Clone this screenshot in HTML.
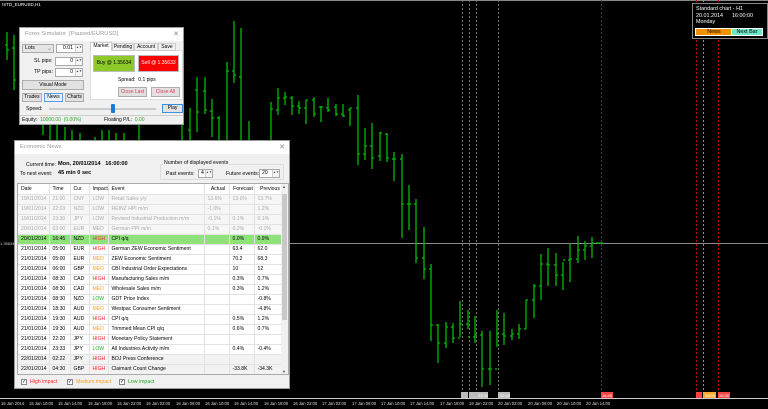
<!DOCTYPE html>
<html><head><meta charset="utf-8">
<style>
*{margin:0;padding:0;box-sizing:border-box}
body{width:768px;height:409px;background:#000;overflow:hidden;position:relative;font-family:"Liberation Sans",sans-serif;font-size:5.2px;color:#000;white-space:nowrap}
.a{position:absolute}
.win{position:absolute;background:#f0f0f0;border:1px solid #9a9a9a}
.tb{position:absolute;left:0;right:0;top:0;height:13px;background:#fff;color:#999;font-size:5.8px;line-height:13px;padding-left:5px}
.x{position:absolute;right:4px;top:0;color:#888;font-size:7px;line-height:13px}
.btn{position:absolute;background:#e1e1e1;border:1px solid #adadad;text-align:center;font-size:5px}
.inp{position:absolute;background:#fff;border:1px solid #aaa;font-size:5.2px;text-align:right;padding-right:9px}
.sp{position:absolute;right:0;top:0;bottom:0;width:7px;border-left:1px solid #ccc;background:#f4f4f4;font-size:3px;color:#444;text-align:center;line-height:4px}
table{border-collapse:collapse;font-size:5.1px;table-layout:fixed}
td{height:10px;border-right:1px solid #e2e2e2;border-bottom:1px solid #e2e2e2;padding-left:3px;white-space:nowrap;overflow:hidden}
tr.p td{color:#aaa;background:#f6f6f6}
tr.g td{background:#8fe27a}
tr.d td{background:#f2f2f2}
.H{color:#f22}.M{color:#f5a020}.L{color:#2a2}
.ax{position:absolute;top:401px;font-size:4.2px;color:#ddd;white-space:nowrap}
.tab{position:absolute;height:8px;border:1px solid #ccc;text-align:center;line-height:7px;font-size:5px}
</style></head><body>

<svg class="a" style="left:0;top:0" width="768" height="409">
<line x1="0" y1="0.5" x2="768" y2="0.5" stroke="#888"/>
<line x1="0" y1="243.5" x2="768" y2="243.5" stroke="#8a8a8a"/>
<g stroke-dasharray="2,2" stroke-width="1">
<line x1="462.5" y1="0" x2="462.5" y2="398" stroke="#777"/>
<line x1="469.5" y1="0" x2="469.5" y2="398" stroke="#777"/>
<line x1="476.5" y1="0" x2="476.5" y2="398" stroke="#777"/>
<line x1="498.5" y1="0" x2="498.5" y2="398" stroke="#777"/>
<line x1="601.5" y1="0" x2="601.5" y2="398" stroke="#b00"/>
<line x1="696.5" y1="0" x2="696.5" y2="398" stroke="#b00"/>
<line x1="703.5" y1="0" x2="703.5" y2="398" stroke="#d80"/>
<line x1="718.5" y1="0" x2="718.5" y2="398" stroke="#b00"/>
</g>
<g stroke="#0b0" stroke-width="1.3" fill="none">
<path d="M7,32V60M5,45H7M7,50H9 M14,35V90M12,48H14M14,80H16 M43,124V135 M50,122V140 M57,124V140 M65,127V140 M72,130V140 M80,133V140 M95,137V140 M102,130V140 M109,130V140 M116,133V140 M124,133V140 M139,120V140 M182,118V140 M190,108V140M188,130H190 M197,77V132M195,90H197M197,112H199 M205,77V114M203,91H205M205,110H207 M212,99V137M210,111H212M212,118H214 M219,116V140M217,118H219 M227,62V140M227,71H229 M234,21V83M232,71H234M234,75H236 M241,28V140M239,77H241 M249,121V140 M271,102V140M271,109H273 M278,88V115M276,110H278M278,98H280 M285,92V105M283,98H285M285,97H287"/>
<path d="M292,96V115M290,98H292M292,106H294 M299,101V114M297,106H299M299,108H301 M306,100V124M304,108H306M306,100H308 M314,97V117M312,100H314M314,114H316 M321,106V122M319,107H321M321,107H323 M328,98V112M326,108H328M328,110H330 M336,104V116M334,107H336M336,114H338 M343,104V117M341,114H343M343,116H345 M350,108V126M348,110H350M350,108H352 M358,95V165M356,108H358M358,154H360 M365,128V160M363,154H365M365,146H367 M372,123V169M370,146H372M372,158H374 M380,132V161M378,156H380M380,133H382 M387,133V162M385,134H387M387,158H389 M394,152V181M392,159H394M394,159H396 M402,154V238M400,159H402M402,204H404 M409,185V230M407,204H409M409,204H411 M416,199V263M414,204H416M416,258H418 M424,227V279M422,258H424M424,269H426 M431,264V341M429,269H431M431,325H433 M438,324V363M436,325H438M438,343H440 M446,322V348M444,343H446M446,327H448 M453,323V343M451,327H453M453,338H455 M460,301V337M458,338H460M460,324H462 M468,310V329M466,324H468M468,337H470 M475,316V343M473,337H475M475,335H477 M482,331V387M480,335H482M482,369H484 M490,331V385M488,369H490M490,369H492 M497,310V347M495,369H497M497,334H499 M504,313V345M502,334H504M504,336H506 M512,329V340M510,336H512M512,334H514 M519,324V339M517,334H519M519,329H521 M526,300V329M524,329H526M526,300H528 M534,284V318M532,300H534M534,286H536 M541,254V300M539,286H541M541,264H543 M548,248V286M546,264H548M548,265H550 M556,253V286M554,265H556M556,275H558 M563,262V290M561,275H563M563,260H565 M570,243V282M568,260H570M570,259H572 M578,236V263M576,259H578M578,250H580 M585,241V260M583,250H585M585,246H587 M592,237V258M590,246H592M592,243H594 M596,243H603"/>
</g>
<line x1="0" y1="398.5" x2="768" y2="398.5" stroke="#ccc"/>
<g font-family="Liberation Sans" font-size="4" fill="#fff">
<rect x="461" y="392" width="7" height="6" fill="#bbb"/><rect x="469" y="392" width="7" height="6" fill="#bbb"/><rect x="476" y="392" width="12" height="6" fill="#bbb"/><rect x="498" y="392" width="12" height="6" fill="#bbb"/>
<rect x="601" y="392" width="12" height="6" fill="#f44"/><rect x="696" y="392" width="6" height="6" fill="#f44"/><rect x="703" y="392" width="13" height="6" fill="#fa3"/><rect x="718" y="392" width="12" height="6" fill="#f44"/>
<text x="602" y="397">16:45</text><text x="705" y="397">05:00</text><text x="719" y="397">08:30</text><text x="478" y="397">23:30</text><text x="500" y="397">02:00</text>
</g>
</svg>

<div class="a" style="left:2px;top:2px;color:#fff;font-size:4.5px">!STD_EURUSD,H1</div>
<div class="a" style="left:0;top:241px;color:#ccc;font-size:4px;background:#000">1.35634</div>

<div class="ax" style="left:1px">15 Jan 2014</div>
<div class="ax" style="left:29px">15 Jan 10:00</div>
<div class="ax" style="left:58px">15 Jan 14:00</div>
<div class="ax" style="left:88px">15 Jan 18:00</div>
<div class="ax" style="left:117px">15 Jan 22:00</div>
<div class="ax" style="left:146px">16 Jan 02:00</div>
<div class="ax" style="left:176px">16 Jan 06:00</div>
<div class="ax" style="left:205px">16 Jan 10:00</div>
<div class="ax" style="left:234px">16 Jan 14:00</div>
<div class="ax" style="left:264px">16 Jan 18:00</div>
<div class="ax" style="left:293px">16 Jan 22:00</div>
<div class="ax" style="left:322px">17 Jan 02:00</div>
<div class="ax" style="left:352px">17 Jan 06:00</div>
<div class="ax" style="left:381px">17 Jan 10:00</div>
<div class="ax" style="left:410px">17 Jan 14:00</div>
<div class="ax" style="left:440px">17 Jan 18:00</div>
<div class="ax" style="left:469px">19 Jan 22:00</div>
<div class="ax" style="left:498px">20 Jan 02:00</div>
<div class="ax" style="left:528px">20 Jan 06:00</div>
<div class="ax" style="left:557px">20 Jan 10:00</div>
<div class="ax" style="left:586px">20 Jan 14:00</div>

<div class="a" style="left:692px;top:3px;width:76px;height:36px;border:1px solid #888;background:#000;color:#fff;font-size:5.4px;line-height:6.5px;padding:2px 0 0 3px">Standard chart - H1<br>20.01.2014&nbsp;&nbsp;&nbsp;&nbsp;&nbsp;&nbsp;16:00:00<br>Monday
<div class="a" style="left:2px;top:24px;width:38px;height:8px;background:#f39000;border:1px solid #fff;color:#000;text-align:center;line-height:6px">News</div>
<div class="a" style="left:38px;top:24px;width:32px;height:8px;background:#6fe8c8;border:1px solid #fff;color:#000;text-align:center;line-height:6px">Next Bar</div>
</div>

<div class="win" style="left:19px;top:27px;width:165px;height:98px">
<div class="tb">Forex Simulator&nbsp; [Paused/EURUSD]<span class="x">✕</span></div>
<div class="inp" style="left:2px;top:16px;width:32px;height:9px;background:#e5e5e5;text-align:left;padding-left:2px;line-height:7px">Lots<span style="position:absolute;right:2px;font-size:4px">⌵</span></div>
<div class="inp" style="left:36px;top:16px;width:27px;height:9px;line-height:7px">0.01<span class="sp">▲▼</span></div>
<div class="a" style="left:14px;top:30px">SL pips:</div>
<div class="inp" style="left:35px;top:29px;width:28px;height:9px;line-height:7px">0<span class="sp">▲▼</span></div>
<div class="a" style="left:14px;top:41px">TP pips:</div>
<div class="inp" style="left:35px;top:40px;width:28px;height:9px;line-height:7px">0<span class="sp">▲▼</span></div>
<div class="btn" style="left:2px;top:52px;width:62px;height:10px;line-height:8px">Visual Mode</div>
<div class="btn" style="left:2px;top:65px;width:20px;height:9px;line-height:7px">Trades</div>
<div class="btn" style="left:24px;top:65px;width:19px;height:9px;line-height:7px;border-color:#5a9ee0;background:#e5f1fb">News</div>
<div class="btn" style="left:45px;top:65px;width:19px;height:9px;line-height:7px">Charts</div>
<div class="a" style="left:70px;top:22px;width:93px;height:50px;background:#fff;border:1px solid #ddd"></div>
<div class="tab" style="left:70px;top:14px;width:22px;height:9px;background:#fff;border-bottom:none">Market</div>
<div class="tab" style="left:92px;top:15px;width:22px">Pending</div>
<div class="tab" style="left:114px;top:15px;width:24px">Account</div>
<div class="tab" style="left:138px;top:15px;width:18px">Save</div>
<div class="a" style="left:73px;top:27px;width:42px;height:17px;background:#8cc929;border:1px solid #bbb;text-align:center;line-height:15px;font-size:5px">Buy @ 1.35634</div>
<div class="a" style="left:118px;top:27px;width:41px;height:17px;background:#f00;border:1px solid #bbb;color:#fff;text-align:center;line-height:15px;font-size:5px">Sell @ 1.35633</div>
<div class="a" style="left:98px;top:49px;font-size:5px">Spread:&nbsp; 0.1 pips</div>
<div class="btn" style="left:98px;top:59px;width:29px;height:10px;line-height:8px;color:#e04060">Close Last</div>
<div class="btn" style="left:131px;top:59px;width:29px;height:10px;line-height:8px;color:#e04060">Close All</div>
<div class="a" style="left:6px;top:78px">Speed:</div>
<div class="a" style="left:29px;top:80px;width:107px;height:2px;background:#ddd;border:1px solid #ccc"></div>
<div class="a" style="left:91px;top:76px;width:4px;height:9px;background:#1e78d8;border-radius:1px"></div>
<div class="btn" style="left:142px;top:76px;width:21px;height:9px;line-height:7px;border-color:#3c8ee0">Play</div>
<div class="a" style="left:0;top:87px;width:163px;height:9px;border-top:1px solid #ccc;line-height:8px;padding-left:2px;font-size:5px">Equity: <span style="color:#2a2">&nbsp;10000.00&nbsp; (0.00%)</span><span style="position:absolute;left:84px">Floating P/L: <span style="color:#2a2">&nbsp;0.00</span></span></div>
</div>

<div class="win" style="left:14px;top:140px;width:276px;height:249px">
<div class="tb">Economic News<span class="x">✕</span></div>
<div class="a" style="left:11px;top:21px">Current time:</div>
<div class="a" style="left:43px;top:20px;font-weight:bold;font-size:5.6px">Mon, 20/01/2014&nbsp;&nbsp; 16:00:00</div>
<div class="a" style="left:5px;top:30px">To next event:</div>
<div class="a" style="left:43px;top:29px;font-weight:bold;font-size:5.6px">45 min 0 sec</div>
<div class="a" style="left:145px;top:23px;width:124px;height:16px;border:1px solid #ddd"></div>
<div class="a" style="left:148px;top:19px;background:#f0f0f0;padding:0 1px">Number of displayed events</div>
<div class="a" style="left:151px;top:30px">Past events:</div>
<div class="inp" style="left:183px;top:28px;width:15px;height:9px;text-align:left;padding-left:2px;line-height:7px">4<span class="sp">▲▼</span></div>
<div class="a" style="left:211px;top:30px">Future events:</div>
<div class="inp" style="left:244px;top:28px;width:21px;height:9px;text-align:left;padding-left:2px;line-height:7px">20<span class="sp">▲▼</span></div>
<div class="a" style="left:2px;top:42px;width:272px;height:192px;background:#fff;border:1px solid #aaa;overflow:hidden">
<table style="width:265px">
<colgroup><col style="width:31px"><col style="width:21px"><col style="width:19px"><col style="width:19px"><col style="width:96px"><col style="width:25px"><col style="width:25px"><col style="width:29px"></colgroup>
<tr><td>Date</td><td>Time</td><td>Cur.</td><td>Impact</td><td>Event</td><td style="text-align:center">Actual</td><td style="text-align:center">Forecast</td><td style="text-align:center">Previous</td></tr>
<tr class="p"><td>19/01/2014</td><td>21:00</td><td>CNY</td><td>LOW</td><td>Retail Sales y/y</td><td>13.6%</td><td>13.6%</td><td>13.7%</td></tr>
<tr class="p"><td>19/01/2014</td><td>22:03</td><td>NZD</td><td>LOW</td><td>REINZ HPI m/m</td><td>-1.0%</td><td></td><td>1.2%</td></tr>
<tr class="p"><td>19/01/2014</td><td>23:30</td><td>JPY</td><td>LOW</td><td>Revised Industrial Production m/m</td><td>-0.1%</td><td>0.1%</td><td>0.1%</td></tr>
<tr class="p"><td>20/01/2014</td><td>02:00</td><td>EUR</td><td>MED</td><td>German PPI m/m</td><td>0.1%</td><td>0.2%</td><td>-0.1%</td></tr>
<tr class="g"><td>20/01/2014</td><td>16:45</td><td>NZD</td><td style="color:#e33">HIGH</td><td>CPI q/q</td><td></td><td>0.0%</td><td>0.9%</td></tr>
<tr><td>21/01/2014</td><td>05:00</td><td>EUR</td><td class="H">HIGH</td><td>German ZEW Economic Sentiment</td><td></td><td>63.4</td><td>62.0</td></tr>
<tr><td>21/01/2014</td><td>05:00</td><td>EUR</td><td class="M">MED</td><td>ZEW Economic Sentiment</td><td></td><td>70.2</td><td>68.3</td></tr>
<tr><td>21/01/2014</td><td>06:00</td><td>GBP</td><td class="M">MED</td><td>CBI Industrial Order Expectations</td><td></td><td>10</td><td>12</td></tr>
<tr><td>21/01/2014</td><td>08:30</td><td>CAD</td><td class="H">HIGH</td><td>Manufacturing Sales m/m</td><td></td><td>0.3%</td><td>0.7%</td></tr>
<tr><td>21/01/2014</td><td>08:30</td><td>CAD</td><td class="M">MED</td><td>Wholesale Sales m/m</td><td></td><td>0.3%</td><td>1.2%</td></tr>
<tr><td>21/01/2014</td><td>08:30</td><td>NZD</td><td class="L">LOW</td><td>GDT Price Index</td><td></td><td></td><td>-0.8%</td></tr>
<tr><td>21/01/2014</td><td>18:30</td><td>AUD</td><td class="M">MED</td><td>Westpac Consumer Sentiment</td><td></td><td></td><td>-4.8%</td></tr>
<tr><td>21/01/2014</td><td>19:30</td><td>AUD</td><td class="H">HIGH</td><td>CPI q/q</td><td></td><td>0.5%</td><td>1.2%</td></tr>
<tr><td>21/01/2014</td><td>19:30</td><td>AUD</td><td class="M">MED</td><td>Trimmed Mean CPI q/q</td><td></td><td>0.6%</td><td>0.7%</td></tr>
<tr><td>21/01/2014</td><td>22:20</td><td>JPY</td><td class="H">HIGH</td><td>Monetary Policy Statement</td><td></td><td></td><td></td></tr>
<tr><td>21/01/2014</td><td>23:33</td><td>JPY</td><td class="L">LOW</td><td>All Industries Activity m/m</td><td></td><td>0.4%</td><td>-0.4%</td></tr>
<tr class="d"><td>22/01/2014</td><td>02:22</td><td>JPY</td><td class="H">HIGH</td><td>BOJ Press Conference</td><td></td><td></td><td></td></tr>
<tr class="d"><td>22/01/2014</td><td>04:30</td><td>GBP</td><td class="H">HIGH</td><td>Claimant Count Change</td><td></td><td>-33.8K</td><td>-34.3K</td></tr>
</table>
<div class="a" style="right:0;top:0;width:7px;height:190px;background:#f0f0f0"><div class="a" style="left:1px;top:10px;width:5px;height:126px;background:#c8c8c8"></div><div class="a" style="top:0;left:1px;font-size:4px;color:#555">▲</div><div class="a" style="bottom:0;left:1px;font-size:4px;color:#555">▼</div></div>
</div>
<div class="a" style="left:6px;top:238px;width:6px;height:6px;border:1px solid #888;background:#fff;font-size:5px;line-height:4px">✓</div><div class="a H" style="left:15px;top:238px">High impact</div>
<div class="a" style="left:52px;top:238px;width:6px;height:6px;border:1px solid #888;background:#fff;font-size:5px;line-height:4px">✓</div><div class="a M" style="left:61px;top:238px">Medium impact</div>
<div class="a" style="left:104px;top:238px;width:6px;height:6px;border:1px solid #888;background:#fff;font-size:5px;line-height:4px">✓</div><div class="a L" style="left:113px;top:238px">Low impact</div>
</div>
</body></html>
